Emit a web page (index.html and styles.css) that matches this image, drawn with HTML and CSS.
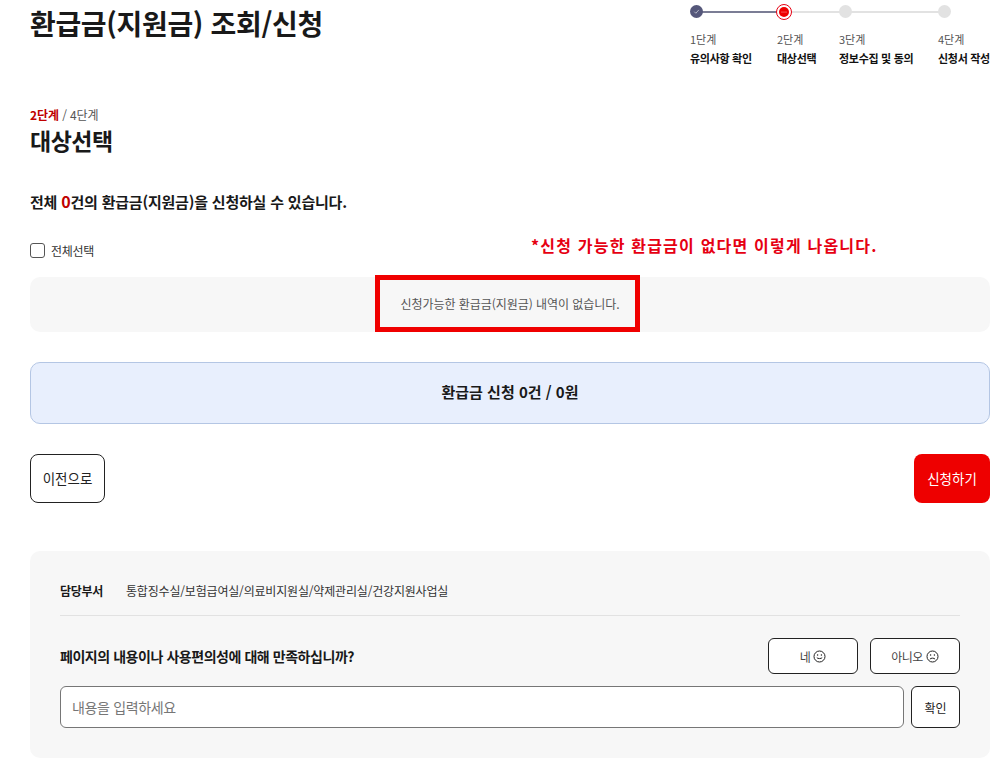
FILE: index.html
```html
<!DOCTYPE html>
<html lang="ko">
<head>
<meta charset="utf-8">
<title>환급금(지원금) 조회/신청</title>
<link rel="stylesheet" href="styles.css">
</head>
<body>
<main class="page">
  <header class="head">
    <h1 class="title">환급금(지원금) 조회/신청</h1>
    <ol class="stepper">
      <li class="step done">
        <span class="dot"><svg width="13" height="13" viewBox="0 0 14 14"><path d="M4.6 7.2l1.7 1.7 3.2-3.6" fill="none" stroke="#b9bccb" stroke-width="1"/></svg></span>
        <span class="step-no">1단계</span><strong class="step-name">유의사항 확인</strong>
      </li>
      <li class="step current">
        <span class="dot"><svg width="10" height="10" viewBox="0 0 10 10"><circle cx="5" cy="5" r="5" fill="#ee0000"/><g fill="#ffb3b3"><circle cx="3" cy="5" r=".6"/><circle cx="5" cy="5" r=".6"/><circle cx="7" cy="5" r=".6"/></g></svg></span>
        <span class="step-no">2단계</span><strong class="step-name">대상선택</strong>
      </li>
      <li class="step">
        <span class="dot"></span>
        <span class="step-no">3단계</span><strong class="step-name">정보수집 및 동의</strong>
      </li>
      <li class="step last">
        <span class="dot"></span>
        <span class="step-no">4단계</span><strong class="step-name">신청서 작성</strong>
      </li>
    </ol>
  </header>

  <p class="progress"><b>2단계</b> / 4단계</p>
  <h2 class="subtitle">대상선택</h2>
  <p class="summary">전체 <em>0</em>건의 환급금(지원금)을 신청하실 수 있습니다.</p>

  <div class="select-row">
    <label class="check"><input type="checkbox"><span>전체선택</span></label>
    <p class="note">*신청 가능한 환급금이 없다면 이렇게 나옵니다.</p>
  </div>

  <div class="empty">
    <span class="empty-text">신청가능한 환급금(지원금) 내역이 없습니다.</span>
    <span class="highlight"></span>
  </div>

  <div class="total">환급금 신청 0건 / 0원</div>

  <div class="actions">
    <button class="btn prev" type="button">이전으로</button>
    <button class="btn apply" type="button">신청하기</button>
  </div>

  <section class="feedback">
    <div class="dept"><strong>담당부서</strong><span>통합징수실/보험급여실/의료비지원실/약제관리실/건강지원사업실</span></div>
    <div class="question">
      <strong>페이지의 내용이나 사용편의성에 대해 만족하십니까?</strong>
      <div class="answers">
        <button class="answer" type="button">네
          <svg width="13" height="13" viewBox="0 0 13 13"><g fill="none" stroke="#222"><circle cx="6.5" cy="6.5" r="5.5"/><path d="M3.8 7.6c.7 1.3 4.7 1.3 5.4 0"/></g><circle cx="4.6" cy="5" r=".7" fill="#222"/><circle cx="8.4" cy="5" r=".7" fill="#222"/></svg>
        </button>
        <button class="answer" type="button">아니오
          <svg width="13" height="13" viewBox="0 0 13 13"><g fill="none" stroke="#222"><circle cx="6.5" cy="6.5" r="5.5"/><path d="M3.9 9.2c.8-1.4 4.4-1.4 5.2 0"/></g><circle cx="4.6" cy="5" r=".7" fill="#222"/><circle cx="8.4" cy="5" r=".7" fill="#222"/></svg>
        </button>
      </div>
    </div>
    <div class="opinion">
      <input class="opinion-input" type="text" placeholder="내용을 입력하세요">
      <button class="confirm" type="button">확인</button>
    </div>
  </section>
</main>
</body>
</html>
```

FILE: styles.css
```css
* { box-sizing: border-box; }
html, body { margin: 0; background: #fff; }
body {
  font-family: "Noto Sans CJK KR", "Noto Sans", sans-serif;
  color: #111;
  overflow: hidden;
}
button, input { font-family: inherit; }
.page { padding: 0 14px 0 30px; height: 780px; }

.head { display: flex; justify-content: space-between; align-items: flex-start; height: 104px; }
.title { margin: 0; font-size: 28px; line-height: 46px; font-weight: 700; letter-spacing: -0.33px; color: #191919; }

.stepper { list-style: none; margin: 5px 0 0; padding: 0; display: grid; grid-template-columns: 87px 62px 99px 52px; }
.step { position: relative; display: flex; flex-direction: column; }
.dot {
  position: relative; z-index: 1;
  width: 13px; height: 13px; border-radius: 50%;
  background: #e2e2e2; display: block;
}
.step::after {
  content: ""; position: absolute; left: 6px; top: 6px;
  width: 100%; height: 1.5px; background: #e2e2e2;
}
.step.last::after { display: none; }
.step.done::after { background: #7b7d95; }
.step.done .dot { background: #55577a; }
.step.done .dot svg { display: block; }
.step.current .dot {
  width: 16px; height: 16px; margin: -1px 0 -2px -1px;
  background: #fff; border: 1px solid #e60012;
  display: flex; align-items: center; justify-content: center;
}
.step-no { margin-top: 13px; font-size: 11px; line-height: 16px; color: #555; }
.step-name { margin-top: 3px; font-size: 11px; line-height: 16px; font-weight: 700; color: #111; white-space: nowrap; letter-spacing: -0.3px; }

.progress { margin: 0; font-size: 12px; line-height: 22px; color: #555; letter-spacing: -0.1px; }
.progress b { color: #c00000; font-weight: 700; }
.subtitle { margin: -2px 0 0; font-size: 23px; line-height: 32px; font-weight: 700; color: #191919; letter-spacing: -0.5px; }
.summary { margin: 33px 0 0; font-size: 15px; line-height: 24px; font-weight: 700; color: #191919; letter-spacing: -0.2px; }
.summary em { font-style: normal; color: #c00000; font-size: 16px; }

.select-row { display: flex; align-items: center; height: 30px; margin-top: 21px; gap: 0; }
.check { display: flex; align-items: center; gap: 6px; font-size: 12px; color: #333; letter-spacing: -0.3px; width: 501px; }
.check input {
  appearance: none; margin: 0; width: 15px; height: 15px;
  border: 1px solid #555; border-radius: 3px; background: #fff;
}
.note { margin: -10px 0 0; font-size: 16px; line-height: 22px; font-weight: 700; color: #e60012; letter-spacing: 1.2px; white-space: nowrap; }

.empty {
  position: relative; margin-top: 12px; height: 55px; border-radius: 10px; background: #f7f7f7;
  display: flex; align-items: center; justify-content: center; padding-bottom: 2px;
  font-size: 12px; color: #555;
}
.empty-text { letter-spacing: -0.05px; }
.highlight {
  position: absolute; left: 345px; top: -2px; width: 265px; height: 57px;
  border: 5px solid #f00000;
}

.total {
  margin-top: 30px; height: 62px; border: 1px solid #b4c6e4; border-radius: 10px;
  background: #e8effd; display: flex; align-items: center; justify-content: center; padding-bottom: 3px;
  font-size: 15px; font-weight: 700; color: #191919;
}

.actions { display: flex; justify-content: space-between; margin-top: 30px; }
.btn { height: 49px; border-radius: 8px; font-size: 13.5px; padding: 0 0 2px; }
.prev { width: 75px; background: #fff; border: 1px solid #222; color: #222; }
.apply { width: 76px; background: #ee0000; border: 0; color: #fff; }

.feedback { margin-top: 48px; height: 207px; border-radius: 10px; background: #f7f7f7; padding: 24px 30px 0 30px; }
.dept { display: flex; align-items: center; height: 30px; font-size: 12px; color: #333; letter-spacing: -0.18px; gap: 23px; }
.dept strong { color: #191919; font-weight: 700; letter-spacing: -0.3px; }
.question { display: flex; justify-content: space-between; align-items: center; border-top: 1px solid #e2e2e2; margin-top: 10px; padding-top: 22px; font-size: 14px; letter-spacing: -0.45px; }
.question strong { color: #191919; font-weight: 700; }
.answers { display: flex; gap: 12px; }
.answer {
  width: 90px; height: 36px; border: 1px solid #222; border-radius: 6px; background: #fff;
  display: flex; align-items: center; justify-content: center; gap: 3px;
  font-size: 12px; letter-spacing: -0.5px; color: #444; padding: 0;
}
.opinion { display: flex; gap: 7px; margin-top: 12px; }
.opinion-input {
  flex: 1; height: 42px; border: 1px solid #767676; border-radius: 6px; background: #fff;
  padding: 0 11px; font-size: 14px; letter-spacing: -0.35px; outline: 0;
}
.opinion-input::placeholder { color: #767676; }
.confirm { width: 49px; height: 42px; border: 1px solid #222; border-radius: 6px; background: #fff; font-size: 12px; color: #222; padding: 0; }
```
